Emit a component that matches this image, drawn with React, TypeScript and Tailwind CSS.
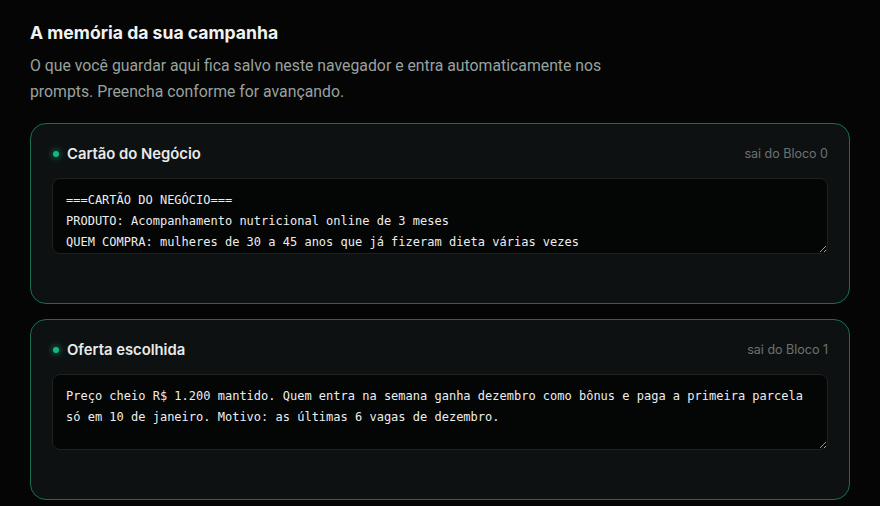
import React from 'react';

const cards = [
    {
        title: 'Cartão do Negócio',
        source: 'sai do Bloco 0',
        value:
            '===CARTÃO DO NEGÓCIO===\nPRODUTO: Acompanhamento nutricional online de 3 meses\nQUEM COMPRA: mulheres de 30 a 45 anos que já fizeram dieta várias vezes\nDOR PRINCIPAL: recomeçar toda segunda-feira',
    },
    {
        title: 'Oferta escolhida',
        source: 'sai do Bloco 1',
        value:
            'Preço cheio R$ 1.200 mantido. Quem entra na semana ganha dezembro como bônus e paga a primeira parcela só em 10 de janeiro. Motivo: as últimas 6 vagas de dezembro.',
    },
];

function MemoryCard({ title, source, value }: { title: string; source: string; value: string }) {
    return (
        <div className="rounded-2xl border border-[#176f4f] bg-[#0e1111] px-[21px] pt-5 pb-[49px]">
            {/* header */}
            <div className="flex h-5 items-center justify-between">
                <div className="flex items-center gap-2">
                    <span className="ml-px h-[6px] w-[6px] rounded-full bg-[#10b981] shadow-[0_0_6px_1px_rgba(16,185,129,0.55)]" />
                    <span className="font-['Inter'] text-[14.8px] font-semibold text-[#e8eaea]">{title}</span>
                </div>
                <span className="font-['Inter'] text-[12.5px] text-[#6b7371]">{source}</span>
            </div>

            <textarea
                defaultValue={value}
                spellCheck={false}
                className="mt-[14px] block h-[76px] w-full resize-y overflow-hidden rounded-lg border border-[#1d2121] bg-[#040505] px-[13px] pt-[11px] font-['DejaVu_Sans_Mono'] text-[12px] leading-[21px] text-[#eceeee] outline-none"
            />
        </div>
    );
}

export default function App() {
    return (
        <div className="min-h-screen bg-[#050505] px-[30px] pt-[21px]">
            <h1 className="font-['Inter'] text-[17.6px] font-bold leading-6 text-[#f1f3f2]">A memória da sua campanha</h1>
            <p className="mt-2 max-w-[620px] font-['Roboto'] text-[15.8px] leading-[26px] text-[#98a29e]">
                O que você guardar aqui fica salvo neste navegador e entra automaticamente nos prompts. Preencha conforme for avançando.
            </p>

            <div className="mt-[18px] flex flex-col gap-[15px]">
                {cards.map((c) => (
                    <MemoryCard key={c.title} {...c} />
                ))}
            </div>
        </div>
    );
}
